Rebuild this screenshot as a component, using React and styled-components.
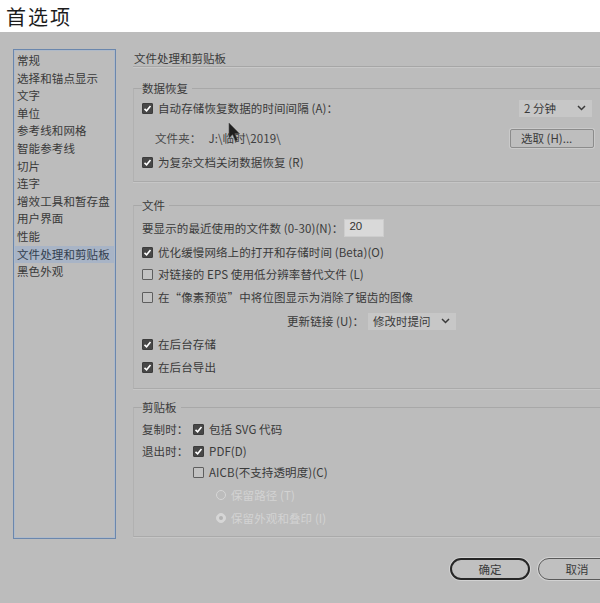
import React from "react";
import styled, { createGlobalStyle } from "styled-components";

const GlobalStyle = createGlobalStyle`
  html, body {
    margin: 0;
    padding: 0;
    width: 600px;
    height: 603px;
    overflow: hidden;
    background: #bcbcbc;
  }
  body {
    font-family: "Noto Sans CJK SC", "Noto Sans", sans-serif;
    color: #3a3a3a;
  }
`;

const NAV = [
  "常规",
  "选择和锚点显示",
  "文字",
  "单位",
  "参考线和网格",
  "智能参考线",
  "切片",
  "连字",
  "增效工具和暂存盘",
  "用户界面",
  "性能",
  "文件处理和剪贴板",
  "黑色外观",
];

const Check = ({ checked }) => (
  <Box $checked={checked}>
    {checked && (
      <svg width="9" height="9" viewBox="0 0 9 9">
        <polyline points="1.5,4.8 3.6,6.8 7.5,2" fill="none" stroke="#fff" strokeWidth="1.6" />
      </svg>
    )}
  </Box>
);

const Chevron = () => (
  <svg width="9" height="6" viewBox="0 0 9 6">
    <polyline points="1,1 4.5,4.5 8,1" fill="none" stroke="#3a3a3a" strokeWidth="1.5" />
  </svg>
);

const App = () => {
  return (
    <Window>
      <GlobalStyle />
      <TitleBar>首选项</TitleBar>
      <Body>
        <Main>
          <NavList>
            {NAV.map((n) => (
              <NavItem key={n} $active={n === "文件处理和剪贴板"}>
                {n}
              </NavItem>
            ))}
          </NavList>

          <Pane>
            <PageHeading>文件处理和剪贴板</PageHeading>

            <Group $mt={13} $pb={9}>
              <Legend>数据恢复</Legend>
              <Row $mt={2}>
                <Check checked />
                <Label>自动存储恢复数据的时间间隔 (A)：</Label>
                <Select $w={73}>
                  <span>2 分钟</span>
                  <Chevron />
                </Select>
              </Row>
              <Row $mt={10} $indent={13}>
                <Label $soft>文件夹：</Label>
                <Path>J:\临时\2019\</Path>
                <PickButton>选取 (H)...</PickButton>
              </Row>
              <Row $mt={4}>
                <Check checked />
                <Label>为复杂文档关闭数据恢复 (R)</Label>
              </Row>
            </Group>

            <Group $mt={15} $pb={11}>
              <Legend>文件</Legend>
              <Row $mt={5}>
                <Label>要显示的最近使用的文件数 (0-30)(N)：</Label>
                <NumberField>20</NumberField>
              </Row>
              <Row $mt={4}>
                <Check checked />
                <Label>优化缓慢网络上的打开和存储时间 (Beta)(O)</Label>
              </Row>
              <Row $mt={2}>
                <Check />
                <Label>对链接的 EPS 使用低分辨率替代文件 (L)</Label>
              </Row>
              <Row $mt={3}>
                <Check />
                <Label>在“像素预览”中将位图显示为消除了锯齿的图像</Label>
              </Row>
              <Row $mt={4} $indent={145}>
                <Label>更新链接 (U)：</Label>
                <Select $w={88} $ml={4}>
                  <span>修改时提问</span>
                  <Chevron />
                </Select>
              </Row>
              <Row $mt={3}>
                <Check checked />
                <Label>在后台存储</Label>
              </Row>
              <Row $mt={3}>
                <Check checked />
                <Label>在后台导出</Label>
              </Row>
            </Group>

            <Group $mt={10} $pb={8}>
              <Legend>剪贴板</Legend>
              <Row $mt={4}>
                <Caption>复制时：</Caption>
                <Check checked />
                <Label>包括 SVG 代码</Label>
              </Row>
              <Row $mt={2}>
                <Caption>退出时：</Caption>
                <Check checked />
                <Label>PDF(D)</Label>
              </Row>
              <Row $mt={1} $indent={51}>
                <Check />
                <Label>AICB(不支持透明度)(C)</Label>
              </Row>
              <Row $mt={3} $indent={74}>
                <Radio />
                <Label $disabled>保留路径 (T)</Label>
              </Row>
              <Row $mt={3} $indent={74}>
                <Radio $checked />
                <Label $disabled>保留外观和叠印 (I)</Label>
              </Row>
            </Group>
          </Pane>
        </Main>

        <Footer>
          <PillButton $primary>确定</PillButton>
          <PillButton>取消</PillButton>
        </Footer>
      </Body>

      <Cursor width="13" height="21" viewBox="0 0 13 21">
        <path d="M1 1 L1 16 L4.6 12.6 L7.4 19 L9.6 18 L6.8 11.8 L11.6 11.8 Z" fill="#1f1f1f" stroke="#555" strokeWidth="0.6" />
      </Cursor>
    </Window>
  );
};

const Window = styled.div`
  position: relative;
  width: 600px;
  height: 603px;
  display: flex;
  flex-direction: column;
  overflow: hidden;
  background: #bcbcbc;
`;

const TitleBar = styled.header`
  height: 32px;
  flex-shrink: 0;
  display: flex;
  align-items: center;
  padding-left: 6px;
  background: #fff;
  font-size: 20px;
  letter-spacing: 2px;
  color: #1c1c1c;
`;

const Body = styled.div`
  display: flex;
  flex-direction: column;
  padding-top: 17px;
`;

const Main = styled.div`
  display: flex;
  align-items: flex-start;
`;

const NavList = styled.ul`
  list-style: none;
  margin: 0 0 0 13px;
  padding: 2px 1px;
  width: 103px;
  height: 490px;
  box-sizing: border-box;
  flex-shrink: 0;
  border: 1px solid #6b87ad;
  box-shadow: inset 0 0 0 1px #aeb9c8;
`;

const NavItem = styled.li`
  height: 17.6px;
  line-height: 17.6px;
  padding-left: 2px;
  font-size: 11.5px;
  letter-spacing: 0.1px;
  white-space: nowrap;
  color: ${(p) => (p.$active ? "#34404f" : "#3a3a3a")};
  background: ${(p) => (p.$active ? "#a8b4c6" : "transparent")};
`;

const Pane = styled.div`
  margin-left: 17px;
  width: 475px;
  flex-shrink: 0;
`;

const PageHeading = styled.div`
  padding: 1px 0 0 1px;
  height: 16px;
  line-height: 16px;
  font-size: 11.5px;
  color: #3a3a3a;
  border-bottom: 1px solid #a6a6a6;
  box-shadow: 0 1px 0 #c8c8c8;
`;

const Group = styled.fieldset`
  margin: ${(p) => p.$mt}px 0 0;
  padding: 0 16px ${(p) => p.$pb}px 8px;
  min-width: 0;
  border: none;
  border-top: 1px solid #a8a8a8;
  border-left: 1px solid #b1b1b1;
  border-bottom: 1px solid #aaaaaa;
  box-shadow: 0 1px 0 #c6c6c6;
`;

const Legend = styled.legend`
  padding: 0 4px 0 0;
  height: 16px;
  line-height: 16px;
  font-size: 11.5px;
  color: #3a3a3a;
`;

const Row = styled.div`
  display: flex;
  align-items: center;
  height: 20px;
  margin-top: ${(p) => p.$mt ?? 3}px;
  padding-left: ${(p) => p.$indent || 0}px;
`;

const Label = styled.span`
  font-size: 11.5px;
  letter-spacing: 0.1px;
  white-space: nowrap;
  color: ${(p) => (p.$disabled ? "#d3d3d3" : p.$soft ? "#484848" : "#3a3a3a")};
`;

const Caption = styled(Label)`
  width: 51px;
  flex-shrink: 0;
`;

const Path = styled(Label)`
  margin-left: 7px;
  color: #404040;
`;

const Box = styled.span`
  width: 11px;
  height: 11px;
  box-sizing: border-box;
  flex-shrink: 0;
  margin-right: 5px;
  display: inline-flex;
  align-items: center;
  justify-content: center;
  border-radius: 1px;
  border: 1px solid ${(p) => (p.$checked ? "#3c3c3c" : "#5e5e5e")};
  background: ${(p) => (p.$checked ? "#474747" : "#c2c2c2")};
`;

const Radio = styled.span`
  position: relative;
  width: 10px;
  height: 10px;
  box-sizing: border-box;
  flex-shrink: 0;
  margin-right: 5px;
  border-radius: 50%;
  border: 1.5px solid #d6d6d6;
  background: ${(p) => (p.$checked ? "#d6d6d6" : "transparent")};

  &::after {
    content: "";
    position: absolute;
    inset: 2px;
    border-radius: 50%;
    background: ${(p) => (p.$checked ? "#b3b3b3" : "transparent")};
  }
`;

const Select = styled.div`
  margin-left: ${(p) => (p.$ml != null ? `${p.$ml}px` : "auto")};
  width: ${(p) => p.$w}px;
  height: 17px;
  box-sizing: border-box;
  padding: 0 6px 0 5px;
  display: flex;
  align-items: center;
  justify-content: space-between;
  background: #c7c7c7;
  font-size: 11.5px;
  color: #3a3a3a;
  white-space: nowrap;
`;

const PickButton = styled.div`
  margin-left: auto;
  margin-right: -2px;
  width: 84px;
  height: 19px;
  box-sizing: border-box;
  padding-left: 10px;
  display: flex;
  align-items: center;
  border: 1px solid #8c8c8c;
  border-radius: 2px;
  background: #bebebe;
  box-shadow: 0 0 0 1px #cacaca;
  font-size: 11.5px;
  color: #3a3a3a;
  white-space: nowrap;
`;

const NumberField = styled.div`
  margin-left: 1px;
  width: 40px;
  height: 18px;
  box-sizing: border-box;
  padding: 0 4px;
  border: 1px solid #cdcdcd;
  background: #d9d9d9;
  font-family: "Liberation Sans", Arial, sans-serif;
  font-size: 11.5px;
  line-height: 13px;
  color: #333;
`;

const Footer = styled.div`
  display: flex;
  gap: 8px;
  margin-top: 19px;
  padding-left: 450px;
`;

const PillButton = styled.div`
  flex-shrink: 0;
  width: ${(p) => (p.$primary ? 80 : 86)}px;
  height: 22px;
  box-sizing: border-box;
  display: flex;
  align-items: center;
  justify-content: center;
  border-radius: 11px;
  border: ${(p) => (p.$primary ? "2px solid #262626" : "1px solid #5a5a5a")};
  background: #c0c0c0;
  box-shadow: 0 0 0 1px #d2d2d2;
  font-size: 11.5px;
  color: #3a3a3a;
  padding-right: ${(p) => (p.$primary ? 0 : 8)}px;
`;

const Cursor = styled.svg`
  position: absolute;
  left: 228px;
  top: 122px;
  pointer-events: none;
`;

export default App;
